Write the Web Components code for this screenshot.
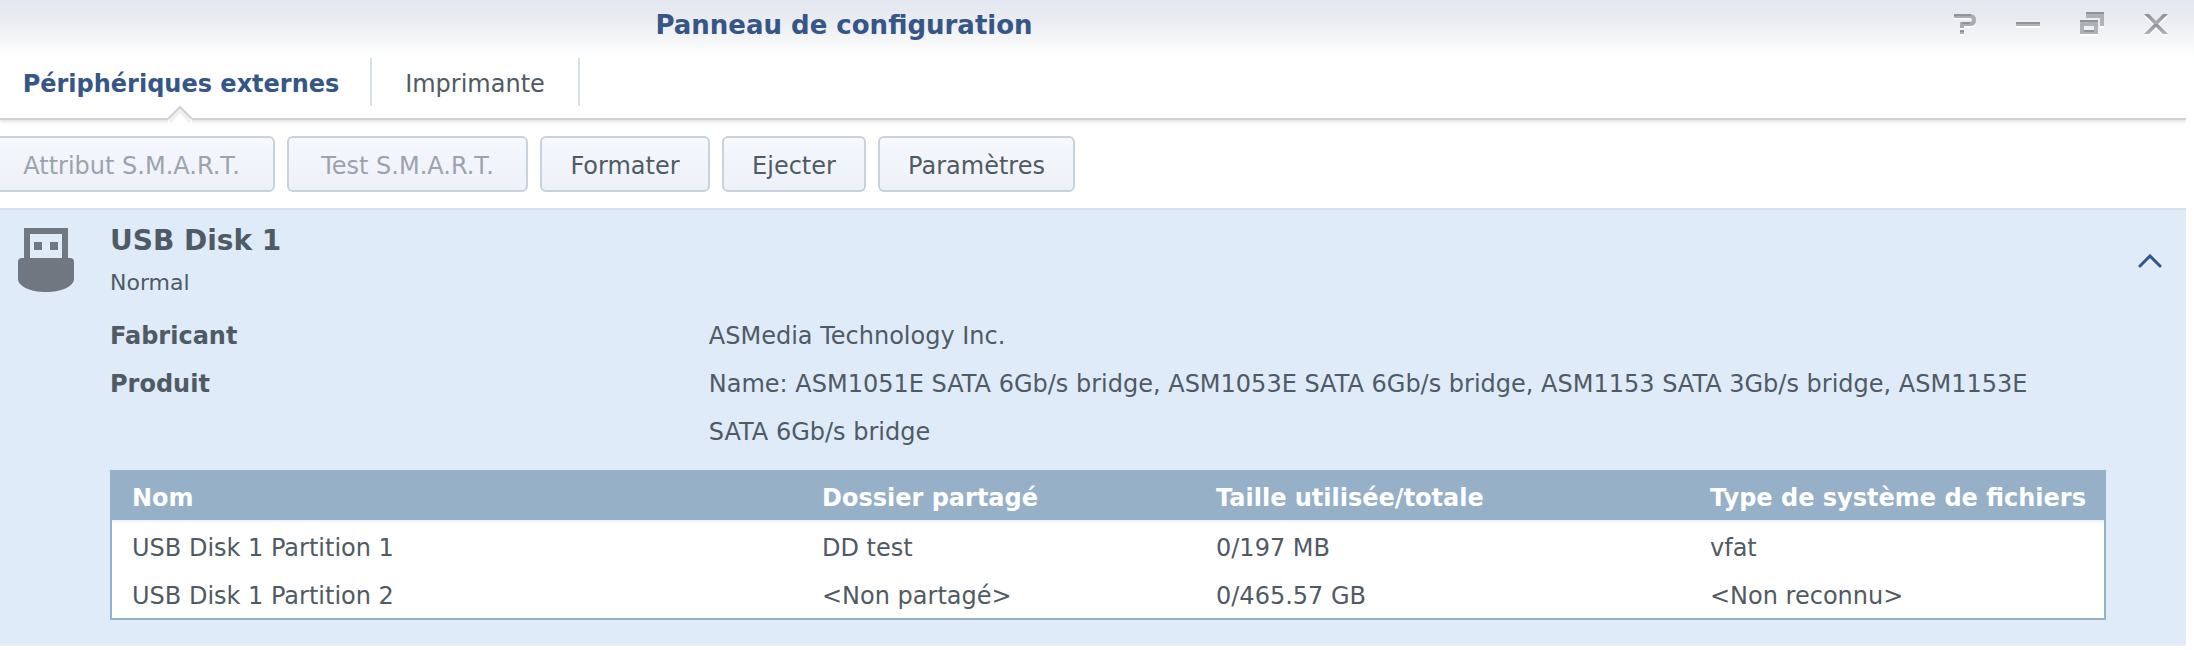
<!DOCTYPE html>
<html lang="fr">
<head>
<meta charset="utf-8">
<title>Panneau de configuration</title>
<style>
  body { margin: 0; background: #fff; color: #505a64; font: 24px/48px Verdana, "DejaVu Sans", sans-serif; }
</style>
</head>
<body>
<control-panel>
  <window-bar slot="bar">Panneau de configuration</window-bar>
  <tab-strip slot="tabs">
    <tab-item active style="--tab-width: 372px">Périphériques externes</tab-item>
    <tab-item style="--tab-width: 208px">Imprimante</tab-item>
  </tab-strip>
  <tool-bar slot="tools">
    <tool-button disabled style="--button-width: 287px">Attribut S.M.A.R.T.</tool-button>
    <tool-button disabled style="--button-width: 241px">Test S.M.A.R.T.</tool-button>
    <tool-button style="--button-width: 170px">Formater</tool-button>
    <tool-button style="--button-width: 144px">Ejecter</tool-button>
    <tool-button style="--button-width: 197px">Paramètres</tool-button>
  </tool-bar>
  <device-card>
    <span slot="name">USB Disk 1</span>
    <span slot="status">Normal</span>
    <detail-row><span slot="label">Fabricant</span>ASMedia Technology Inc.</detail-row>
    <detail-row><span slot="label">Produit</span>Name: ASM1051E SATA 6Gb/s bridge, ASM1053E SATA 6Gb/s bridge, ASM1153 SATA 3Gb/s bridge, ASM1153E SATA 6Gb/s bridge</detail-row>
    <partition-table slot="table"></partition-table>
  </device-card>
</control-panel>

<script>
function define(name, markup, setup) {
  customElements.define(name, class extends HTMLElement {
    connectedCallback() {
      if (this.shadowRoot) return;
      this.attachShadow({ mode: "open" }).innerHTML =
        "<style>*{box-sizing:border-box}:host{display:block;box-sizing:border-box}</style>" + markup;
      if (setup) setup(this);
    }
  });
}

define("control-panel", `
  <style>
    main { margin-right: 8px; }
  </style>
  <slot name="bar"></slot>
  <main><slot name="tabs"></slot><slot name="tools"></slot><slot></slot></main>`);

define("window-bar", `
  <style>
    :host { display: grid; grid-template-columns: minmax(0, 1688fr) minmax(0, 506fr); height: 58px; background: linear-gradient(#e2e7f0, #e9ebf0 18px, #fff); }
    h1 { margin: 0; padding-top: 1px; font-size: 26px; line-height: 48px; color: #365687; text-align: center; }
    nav { display: flex; justify-content: flex-end; gap: 40px; padding: 12px 26px 0 0; }
    button { width: 24px; height: 24px; padding: 0; border: 0; background: none; }
    svg { display: block; }
  </style>
  <h1><slot></slot></h1>
  <nav>
    <button aria-label="Aide"><svg width="24" height="24" fill="none">
      <path d="M2 6h16q4 0 4 4t-4 4H10v4M8 23h4" stroke="#fff" stroke-width="3" opacity=".8"/>
      <path d="M2 4h16q4 0 4 4t-4 4H10v4" stroke="#a9acb3" stroke-width="4"/>
      <path d="M2 3h17M10 11h8M8 19h4" stroke="#8f9297" stroke-width="2"/>
      <path d="M8 21h4" stroke="#abaeb5" stroke-width="2"/></svg></button>
    <button aria-label="Réduire"><svg width="24" height="24">
      <path fill="#fff" d="M0 14h24v2H0z"/><path fill="#aeb1b8" d="M0 12h24v2H0z"/><path fill="#909398" d="M0 10h24v2H0z"/></svg></button>
    <button aria-label="Restaurer"><svg width="24" height="24">
      <path fill="#fff" opacity=".8" d="M0 22h18v2H0zM20 14h4v2h-4z"/>
      <path fill="#aeb1b8" d="M6 0h18v14h-4V6H6zM0 8h18v14H0zM4 14v4h10v-4z" fill-rule="evenodd"/>
      <path fill="#909398" d="M6 0h18v2H6zM0 8h18v2H0zM4 18h10v2H4z"/></svg></button>
    <button aria-label="Fermer"><svg width="24" height="24">
      <path fill="#fff" opacity=".8" d="M0 24l10-10L0 4h5l7 7 7-7h5L14 14l10 10h-5l-7-7-7 7z"/>
      <linearGradient id="g" x2="0" y2="1"><stop stop-color="#8b8e93"/><stop offset=".5" stop-color="#aaaeb6"/><stop offset=".5" stop-color="#909399"/><stop offset="1" stop-color="#aeb1b8"/></linearGradient>
      <path fill="url(#g)" d="M0 2h5l7 7 7-7h5L14 12l10 10h-5l-7-7-7 7H0l10-10z"/></svg></button>
  </nav>`);

define("tab-strip", `
  <style>
    :host { border-bottom: 2px solid #d0d1d1; box-shadow: 0 2px 4px rgba(0,0,0,.12); height: 62px; clip-path: inset(0 0 -8px 0); }
    div { display: flex; height: 60px; }
  </style>
  <div role="tablist"><slot></slot></div>`);

define("tab-item", `
  <style>
    :host { position: relative; width: var(--tab-width); height: 60px; }
    a { display: block; height: 48px; line-height: 52px; border-right: 2px solid #d8e1eb; color: inherit; text-align: center; text-decoration: none; white-space: nowrap; padding-right: 8px; }
    :host(:not([active])) a { padding: 0; }
    :host([active]) a { font-weight: bold; color: #365687; }
    svg { display: none; position: absolute; left: 164px; top: 46px; }
    :host([active]) svg { display: block; }
  </style>
  <a href="#" role="tab"><slot></slot></a>
  <svg width="32" height="24"><path fill="#fff" d="M4 24V15L16 2l12 13v9z"/><path fill="none" stroke="#000" stroke-opacity=".06" stroke-width="4" d="M6 18 16 6l10 12"/><path fill="none" stroke="#d0d1d1" stroke-width="2" d="M4 15 16 3 28 15"/></svg>`,
  el => el.shadowRoot.querySelector("a").setAttribute("aria-selected", el.hasAttribute("active")));

define("tool-bar", `
  <style>:host { display: flex; gap: 12px; height: 88px; padding-top: 16px; margin-left: -12px; }</style>
  <slot></slot>`);

define("tool-button", `
  <style>
    :host { width: var(--button-width); }
    button { width: 100%; height: 56px; padding: 4px 0 0; border: 2px solid #c8d2dd; border-radius: 6px; background: linear-gradient(#f5f9fe, #edf1f8); font: inherit; line-height: 48px; color: #505a64; white-space: nowrap; }
    button:disabled { color: #9ba3ad; }
  </style>
  <button type="button"><slot></slot></button>`,
  el => el.shadowRoot.querySelector("button").disabled = el.hasAttribute("disabled"));

define("device-card", `
  <style>
    :host { background: #dfebf9; border-top: 2px solid #d5dfea; border-bottom: 2px solid #ebeff3; padding: 0 80px 24px 110px; }
    header { position: relative; height: 102px; padding-top: 13px; }
    .usb { position: absolute; left: -92px; top: 18px; }
    h2 { margin: 0; font-size: 28px; line-height: 36px; }
    p { margin: 0; padding-top: 8px; font-size: 22px; line-height: 32px; }
    button { position: absolute; right: -56px; top: 44px; padding: 0; border: 0; background: none; }
    svg { display: block; }
    dl { margin: 0 0 14px; }
  </style>
  <header>
    <svg class="usb" width="56" height="64" fill="#707780"><path fill-rule="evenodd" d="M6 0h44v30h2q4 0 4 4v17C56 58 44 64 28 64S0 58 0 51V34q0-4 4-4h2zM12 6v24h32V6z"/><path d="M16 14h8v8h-8zM32 14h8v8h-8z"/></svg>
    <h2><slot name="name"></slot></h2>
    <p><slot name="status"></slot></p>
    <button aria-label="Replier"><svg width="24" height="14"><path fill="none" stroke="#34558b" stroke-width="3" stroke-linecap="round" d="M2 12 12 2 22 12"/></svg></button>
  </header>
  <dl><slot></slot></dl>
  <slot name="table"></slot>`);

define("detail-row", `
  <style>
    :host { display: grid; grid-template-columns: 30% 68%; }
    dt { font-weight: bold; }
    dd { margin: 0; }
  </style>
  <dt><slot name="label"></slot></dt><dd><slot></slot></dd>`);

define("partition-table", `
  <style>
    table { width: 100%; border: 2px solid #96b0c8; border-spacing: 0; table-layout: fixed; background: #fff; }
    th, td { height: 48px; padding: 4px 0 0 20px; text-align: left; line-height: 44px; white-space: nowrap; }
    th { height: 50px; color: #fff; background: #96b0c8; border-bottom: 2px solid #edf3fa; }
    th:nth-child(1) { width: 690px; } th:nth-child(2) { width: 394px; } th:nth-child(3) { width: 494px; }
  </style>
  <table>
    <thead><tr><th>Nom</th><th>Dossier partagé</th><th>Taille utilisée/totale</th><th>Type de système de fichiers</th></tr></thead>
    <tbody>
      <tr><td>USB Disk 1 Partition 1</td><td>DD test</td><td>0/197 MB</td><td>vfat</td></tr>
      <tr><td>USB Disk 1 Partition 2</td><td>&lt;Non partagé&gt;</td><td>0/465.57 GB</td><td>&lt;Non reconnu&gt;</td></tr>
    </tbody>
  </table>`);
</script>
</body>
</html>
